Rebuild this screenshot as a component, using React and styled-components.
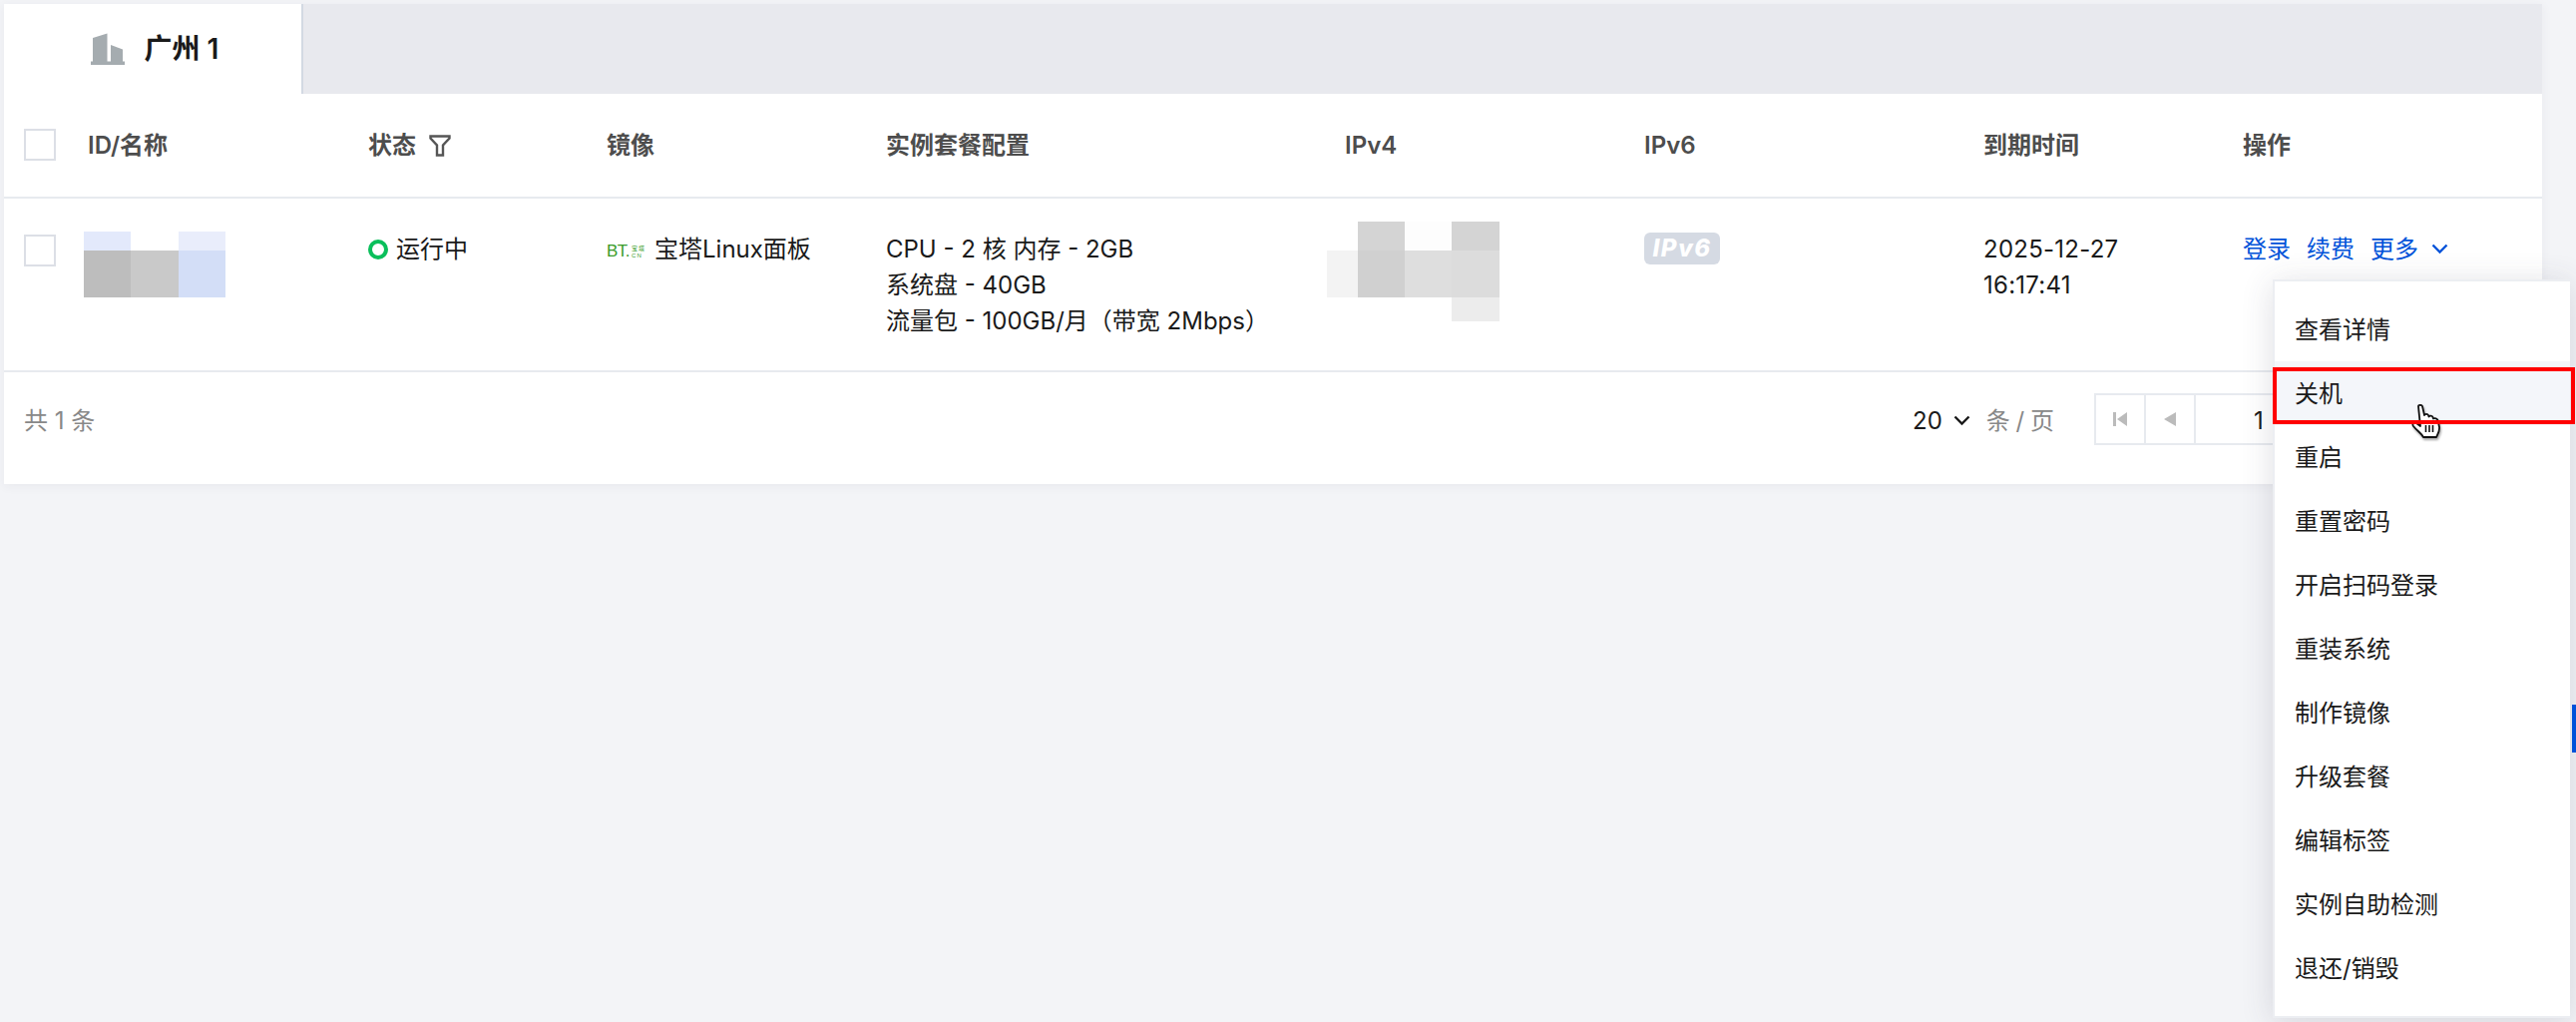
import React from "react"
import styled, { createGlobalStyle } from "styled-components"

const GlobalStyle = createGlobalStyle`
    html, body {
        margin: 0;
        background: #f3f4f7;
        font-family: Inter, "Noto Sans CJK SC", sans-serif;
        font-size: 24px;
        line-height: 36px;
        color: #1a1a1a;
    }
    * {
        box-sizing: border-box;
    }
`

const Page = styled.div`
    position: relative;
    width: 2582px;
    height: 1024px;
    overflow: hidden;
    padding: 4px 34px 0 4px;
`

const Card = styled.div`
    background: #fff;
    box-shadow: 0 2px 10px rgba(54, 58, 80, 0.06);
`

const TabBar = styled.div`
    display: flex;
    height: 90px;
    background: #e8e9ee;
`

const Tab = styled.div`
    display: flex;
    align-items: center;
    justify-content: center;
    gap: 20px;
    width: 300px;
    padding-left: 4px;
    background: #fff;
    border-right: 2px solid #d3d9e3;
    font-size: 28px;
    font-weight: 600;
    color: #1a1a1a;
`

const Row = styled.div`
    display: grid;
    grid-template-columns: 84px 281px 239px 280px 460px 300px 340px 260px 300px;
    border-bottom: 2px solid #e7eaef;
    height: ${props => props.$height}px;
    align-items: ${props => props.$head ? "center" : "start"};
    padding-top: ${props => props.$head ? 1 : 33}px;
`

const HeadCell = styled.div`
    display: flex;
    align-items: center;
    gap: 13px;
    font-weight: 600;
    color: #4d4d4d;
`

const Cell = styled.div`
    display: flex;
    align-items: ${props => props.$top ? "flex-start" : "center"};
    flex-direction: ${props => props.$stack ? "column" : "row"};
    gap: ${props => props.$gap || 0}px;
`

const DateCell = styled(Cell)`
    letter-spacing: 0.25px;
`

const CheckCell = styled.div`
    padding-left: 20px;
    padding-top: ${props => props.$body ? 3 : 0}px;
    margin-top: ${props => props.$body ? 0 : -2}px;
`

const Checkbox = styled.div`
    width: 32px;
    height: 32px;
    background: #fff;
    border: 2px solid #dcdfe6;
`

const Mosaic = styled.svg`
    display: block;
    margin-left: ${props => props.$shift}px;
    margin-top: ${props => props.$lift}px;
`

const StatusDot = styled.span`
    width: 20px;
    height: 20px;
    border: 4px solid #0abf5b;
    border-radius: 50%;
    margin-right: 8px;
`

const BtLogo = styled.span`
    display: flex;
    align-items: flex-end;
    width: 48px;
    height: 20px;
    color: #3a9c2a;
    font-family: "Liberation Sans", "Noto Sans CJK SC", sans-serif;
    font-size: 17px;
    line-height: 17px;
    letter-spacing: -0.5px;
`

const BtSmall = styled.span`
    display: flex;
    flex-direction: column;
    margin-left: 2px;
    font-size: 6px;
    line-height: 7px;
    letter-spacing: 1px;
`

const Badge = styled.span`
    display: flex;
    align-items: center;
    justify-content: center;
    width: 76px;
    height: 32px;
    margin-top: 1px;
    background: #d5dae3;
    border-radius: 6px;
    color: #fff;
    font-size: 24px;
    font-weight: 800;
    font-style: italic;
    letter-spacing: 1.5px;
`

const ActionLink = styled.a`
    display: flex;
    align-items: center;
    gap: 13px;
    color: #0052d9;
`

const Footer = styled.div`
    display: flex;
    align-items: center;
    justify-content: space-between;
    height: 112px;
    padding: 0 20px 15px;
    color: #888;
`

const PageSize = styled.div`
    display: flex;
    align-items: center;
    gap: 40px;
`

const SizeSelect = styled.div`
    display: flex;
    align-items: center;
    gap: 11px;
`

const SizeValue = styled.span`
    color: #1a1a1a;
`

const SizeUnit = styled.span`
    word-spacing: -1px;
`

const Pager = styled.div`
    display: flex;
    height: 52px;
    margin-top: -4px;
    border: 2px solid #e7eaef;
`

const PagerButton = styled.div`
    display: flex;
    align-items: center;
    justify-content: center;
    width: 50px;
    border-right: 2px solid #e7eaef;
`

const PagerInput = styled.div`
    display: flex;
    align-items: center;
    justify-content: center;
    width: 128px;
    padding-top: 4px;
    color: #1a1a1a;
    border-right: 2px solid #e7eaef;
`

const PagerTotal = styled.div`
    display: flex;
    align-items: center;
    justify-content: center;
    width: 97px;
    border-right: 2px solid #e7eaef;
`

const Menu = styled.div`
    position: absolute;
    left: 2278px;
    top: 280px;
    width: 298px;
    padding: 16px 0;
    background: #fff;
    border: 2px solid #eceef2;
    border-right: none;
    box-shadow: 0 4px 30px rgba(54, 58, 80, 0.16);
`

const MenuItem = styled.div`
    display: flex;
    align-items: center;
    height: 64px;
    padding: 2px 0 0 20px;
    background: ${props => props.$active ? "#f4f6fa" : "#fff"};
`

const Highlight = styled.div`
    position: absolute;
    left: 2278px;
    top: 368px;
    width: 303px;
    height: 57px;
    border: 4px solid #ff0000;
`

const Cursor = styled.svg`
    position: absolute;
    left: 2417px;
    top: 405px;
    filter: drop-shadow(1px 2px 1px rgba(0, 0, 0, 0.35));
`

const SideTab = styled.div`
    position: absolute;
    left: 2578px;
    top: 706px;
    width: 4px;
    height: 48px;
    background: #0052d9;
`

const nameCells = [
    [0, 0, 47, 19, "#e3e9fb"], [47, 0, 48, 19, "#fff"], [95, 0, 47, 19, "#e9edfb"],
    [0, 19, 47, 47, "#bdbdbd"], [47, 19, 48, 47, "#c9c9c9"], [95, 19, 47, 47, "#d3def7"],
]

const ipCells = [
    [31, 0, 47, 29, "#d4d4d4"], [78, 0, 47, 29, "#fdfdfd"], [125, 0, 48, 29, "#d4d4d4"],
    [0, 29, 31, 47, "#f3f3f3"], [31, 29, 47, 47, "#d0d0d0"], [78, 29, 47, 47, "#dedede"],
    [125, 29, 48, 47, "#dcdcdc"], [125, 76, 48, 24, "#ececec"],
]

const menuItems = [
    "查看详情", "关机", "重启", "重置密码", "开启扫码登录", "重装系统",
    "制作镜像", "升级套餐", "编辑标签", "实例自助检测", "退还/销毁",
]

function BlurBlock({ cells, width, height, shift, lift }) {
    return <Mosaic width={ width } height={ height } $shift={ shift } $lift={ lift }>
        { cells.map(([x, y, w, h, fill]) => <rect key={ `${x}-${y}` } x={ x } y={ y } width={ w } height={ h } fill={ fill }/>) }
    </Mosaic>
}

function BuildingIcon() {
    return <svg width="34" height="32" viewBox="0 0 34 32" fill="#a5acb0">
        <path d="M2 5 L16.5 0.5 V29 H2 Z"/>
        <path d="M20 12 L32 16.5 V29 H20 Z"/>
        <rect x="0" y="28.5" width="34" height="3.5"/>
    </svg>
}

function FilterIcon() {
    return <svg width="22" height="22" viewBox="0 0 22 22" fill="none" stroke="#555" strokeWidth="2.4">
        <path d="M1.5 1.5 H20.5 V3.5 L14 10.5 V20.5 H8 V10.5 L1.5 3.5 Z"/>
    </svg>
}

function Chevron({ color, size }) {
    return <svg width={ size } height={ size * 0.65 } viewBox="0 0 17 11" fill="none" stroke={ color } strokeWidth="2.4">
        <path d="M1.5 1.5 L8.5 8.5 L15.5 1.5"/>
    </svg>
}

function FirstIcon() {
    return <svg width="16" height="16" viewBox="0 0 16 16" fill="#bbb">
        <rect x="1" y="1" width="3" height="14"/>
        <path d="M15 1 V15 L5 8 Z"/>
    </svg>
}

function PrevIcon() {
    return <svg width="14" height="16" viewBox="0 0 14 16" fill="#bbb">
        <path d="M13 1 V15 L1 8 Z"/>
    </svg>
}

function HandCursor() {
    return <Cursor width="30" height="34" viewBox="0 0 30 34">
        <path
            d="M7 2 C7 0.5 10.5 0.5 11 2 L13 11 C13.5 9.5 16.5 9.5 17 11 L17.5 12.5 C18.5 11 21 11.5 21.5 13 L22 14.5 C23.5 13.5 26 14.5 26.5 16 L28 23 C28.5 27 26.5 30 25 33 H12 C10 29 6 27 2 22 C0.5 20 2.5 17.5 5 19 L9 22 Z"
            fill="#fff"
            stroke="#111"
            strokeWidth="1.8"
            strokeLinejoin="round"
        />
        <path d="M14.5 21 V28 M18 21 V28 M21.5 21 V28" stroke="#111" strokeWidth="1.6"/>
    </Cursor>
}

export default function App() {
    return <Page>

        <GlobalStyle/>

        <Card>

            <TabBar>
                <Tab>
                    <BuildingIcon/>
                    <span>广州 1</span>
                </Tab>
            </TabBar>

            <Row $head $height={ 105 }>
                <CheckCell><Checkbox/></CheckCell>
                <HeadCell>ID/名称</HeadCell>
                <HeadCell>状态 <FilterIcon/></HeadCell>
                <HeadCell>镜像</HeadCell>
                <HeadCell>实例套餐配置</HeadCell>
                <HeadCell>IPv4</HeadCell>
                <HeadCell>IPv6</HeadCell>
                <HeadCell>到期时间</HeadCell>
                <HeadCell>操作</HeadCell>
            </Row>

            <Row $height={ 174 }>
                <CheckCell $body><Checkbox/></CheckCell>
                <Cell $top>
                    <BlurBlock cells={ nameCells } width={ 142 } height={ 66 } shift={ -4 } lift={ 0 }/>
                </Cell>
                <Cell><StatusDot/>运行中</Cell>
                <Cell>
                    <BtLogo>BT.<BtSmall><span>宝塔</span><span>CN</span></BtSmall></BtLogo>
                    宝塔Linux面板
                </Cell>
                <Cell $stack $top>
                    <span>CPU - 2 核 内存 - 2GB</span>
                    <span>系统盘 - 40GB</span>
                    <span>流量包 - 100GB/月（带宽 2Mbps）</span>
                </Cell>
                <Cell $top>
                    <BlurBlock cells={ ipCells } width={ 173 } height={ 100 } shift={ -18 } lift={ -10 }/>
                </Cell>
                <Cell $top><Badge>IPv6</Badge></Cell>
                <DateCell $stack $top>
                    <span>2025-12-27</span>
                    <span>16:17:41</span>
                </DateCell>
                <Cell $gap={ 16 }>
                    <ActionLink>登录</ActionLink>
                    <ActionLink>续费</ActionLink>
                    <ActionLink>更多 <Chevron color="#0052d9" size={ 17 }/></ActionLink>
                </Cell>
            </Row>

            <Footer>
                <span>共 1 条</span>
                <PageSize>
                    <Cell $gap={ 16 }>
                        <SizeSelect>
                            <SizeValue>20</SizeValue>
                            <Chevron color="#1a1a1a" size={ 17 }/>
                        </SizeSelect>
                        <SizeUnit>条 / 页</SizeUnit>
                    </Cell>
                    <Pager>
                        <PagerButton><FirstIcon/></PagerButton>
                        <PagerButton><PrevIcon/></PagerButton>
                        <PagerInput>1</PagerInput>
                        <PagerTotal>/ 1 页</PagerTotal>
                        <PagerButton/>
                        <PagerButton/>
                    </Pager>
                </PageSize>
            </Footer>

        </Card>

        <Menu>
            { menuItems.map((item, i) => <MenuItem key={ item } $active={ i === 1 }>{ item }</MenuItem>) }
        </Menu>

        <SideTab/>
        <HandCursor/>
        <Highlight/>

    </Page>
}
